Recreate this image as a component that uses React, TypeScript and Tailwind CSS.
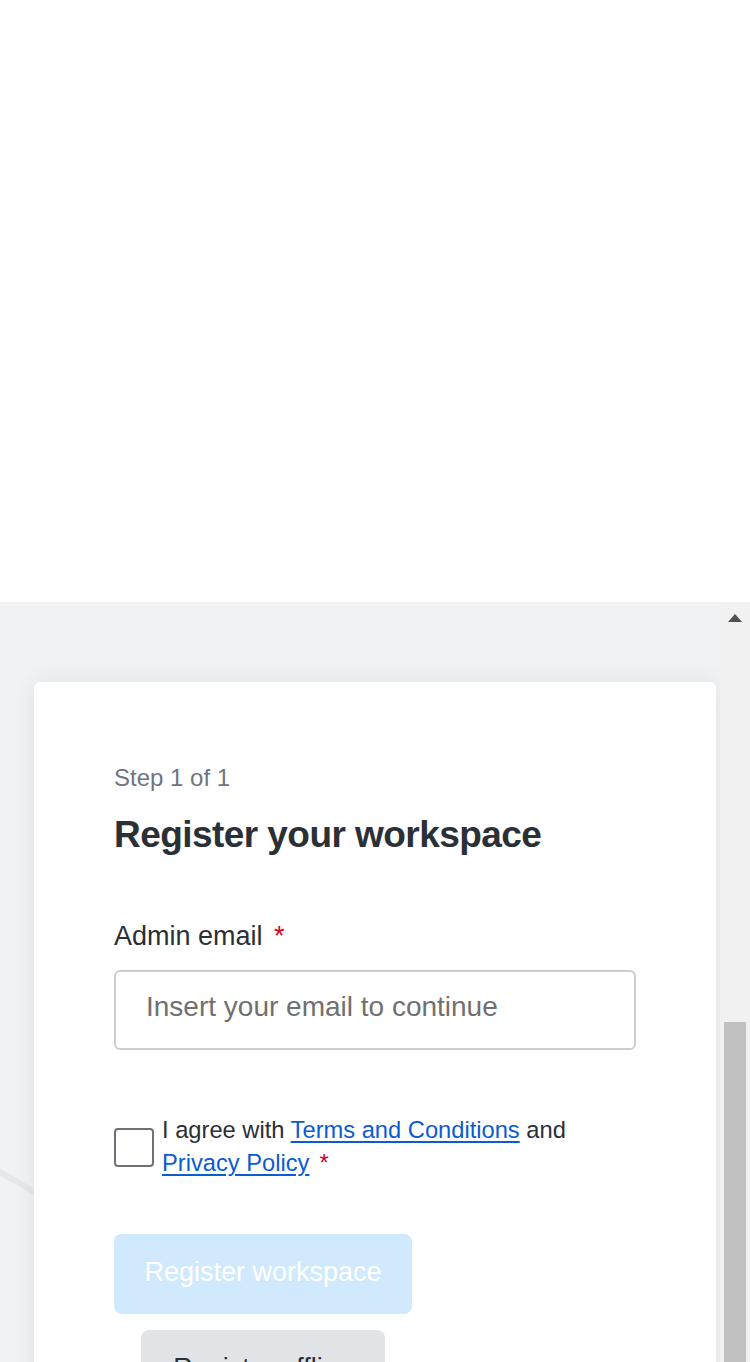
import React from "react";

export default function App() {
  return (
    <div
      className="h-[1362px] w-[750px] overflow-hidden flex flex-col bg-white"
      style={{ fontFamily: '"Liberation Sans", Arial, sans-serif' }}
    >
      <div className="h-[602px] shrink-0 bg-white" />
      <div className="flex flex-1 min-h-0">
        <div className="relative flex-1 bg-[#f1f2f4] pt-[80px] pl-[34px] overflow-hidden">
          <svg
            className="absolute left-0 top-[560px]"
            width="80"
            height="60"
            viewBox="0 0 80 60"
          >
            <line x1="-4" y1="8" x2="80" y2="56" stroke="#e7e8eb" strokeWidth="6" />
          </svg>
          <div className="relative w-[682px] rounded-[6px] bg-white shadow-[0_0_24px_rgba(0,0,0,0.07)] pt-[80px] px-[80px] pb-[80px]">
            <div className="text-[24px] leading-[32px] text-[#6e7580]">Step 1 of 1</div>
            <h1 className="mt-[19px] text-[37px] leading-[44px] font-bold tracking-[-0.015em] text-[#2b2f36]">
              Register your workspace
            </h1>
            <div className="mt-[61px] text-[27px] leading-[36px] text-[#2b2f36]">
              Admin email <span className="text-[#d0021b] ml-[4px]">*</span>
            </div>
            <div className="mt-[16px] h-[80px] w-[522px] rounded-[6px] border-2 border-[#caced3] flex items-center pl-[30px] pb-[6px]">
              <span className="text-[28px] text-[#707070]">Insert your email to continue</span>
            </div>
            <div className="mt-[64px] flex items-center gap-[8px]">
              <div className="h-[39px] w-[40px] shrink-0 rounded-[4px] border-2 border-[#6e7178] bg-white" />
              <div className="text-[23.7px] leading-[33px] text-[#2b2f36]">
                I agree with{" "}
                <span className="text-[#0b5bd3] underline underline-offset-[3px]">Terms and Conditions</span>{" "}
                and
                <br />
                <span className="text-[#0b5bd3] underline underline-offset-[3px]">Privacy Policy</span>
                <span className="text-[#d0021b] ml-[10px]">*</span>
              </div>
            </div>
            <div className="mt-[54px] inline-flex flex-col items-center gap-[16px]">
              <div className="h-[80px] w-[298px] rounded-[8px] bg-[#d0e9fc] flex items-center justify-center pb-[4px] text-[27px] text-white">
                Register workspace
              </div>
              <div className="h-[80px] w-[244px] rounded-[8px] bg-[#e1e4e7] flex items-center justify-center pb-[4px] text-[27px] text-[#2b2f36]">
                Register offline
              </div>
            </div>
          </div>
        </div>
        <div className="w-[30px] shrink-0 bg-[#f1f1f1] flex flex-col">
          <div className="h-[32px] flex items-center justify-center">
            <svg width="16" height="10" viewBox="0 0 16 10">
              <polygon points="8,1 15,9 1,9" fill="#505050" />
            </svg>
          </div>
          <div className="h-[388px]" />
          <div className="flex-1 mx-[4px] bg-[#c1c1c1]" />
        </div>
      </div>
    </div>
  );
}
